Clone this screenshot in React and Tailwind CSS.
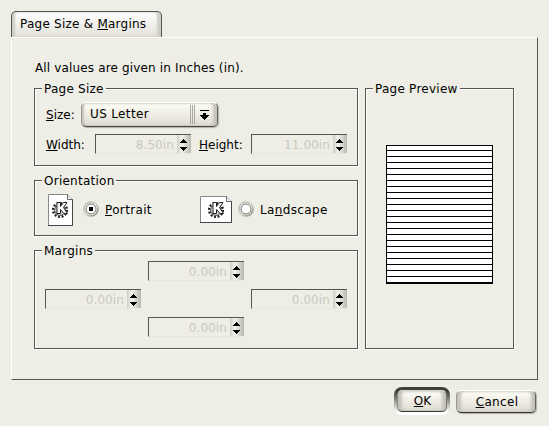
import clsx from "clsx";

const previewLines = Array.from({ length: 23 }, (_, i) => i);

// Group box with the etched border and the title over the top line
function GroupBox({ title, titleWidth, className, children }) {
  return (
    <div
      className={clsx(
        "relative border border-[#555552] shadow-[1px_1px_0_#fff,inset_1px_1px_0_#fff]",
        className
      )}
    >
      <span
        className={clsx(
          "absolute left-[7px] -top-[8px] h-[16px] bg-[#eeeee6] pl-[2px] leading-[16px] tracking-[0.25px] whitespace-nowrap",
          titleWidth
        )}
      >
        {title}
      </span>
      {children}
    </div>
  );
}

function SpinBox({ value, className }) {
  return (
    <div
      className={clsx(
        "flex h-[20px] w-[96px] shrink-0 border-t border-l border-b border-t-[#555552] border-l-[#555552] border-b-[#e6e6e6]",
        className
      )}
    >
      <span className="flex-1 pr-[3px] text-right leading-[20px] tracking-[0.1px] text-[#c9c9c0]">
        {value}
      </span>
      <span className="flex h-[18px] w-[14px] items-center justify-center bg-linear-to-r from-[#d0cfc6] via-[#f4f3ec] via-35% to-[#b9b8af]">
        <svg width="14" height="18" viewBox="0 0 14 18" shapeRendering="crispEdges">
          <path d="M6 4h1v1h1v1h1v1h1v1H3V7h1V6h1V5h1z" />
          <path d="M3 12h7v1H9v1H8v1H7v1H6v-1H5v-1H4v-1H3z" />
        </svg>
      </span>
    </div>
  );
}

function Gear({ x, y }) {
  return (
    <g transform={`translate(${x} ${y})`}>
      <circle cx="8" cy="9" r="6.8" fill="none" stroke="#222" strokeWidth="2.6" strokeDasharray="1.9 1.66" />
      <circle cx="8" cy="9" r="5.4" fill="#d4d4d0" stroke="#555" strokeWidth="1" />
      <path
        d="M5 1.5H8.5V5.5L11.5 1.5H15L11.5 6.5L15.5 12.5H12L8.5 8.5V12.5H5z"
        fill="#fff"
        stroke="#222"
        strokeWidth="1"
      />
    </g>
  );
}

function PortraitIcon() {
  return (
    <svg width="26" height="32" viewBox="0 0 26 32">
      <path d="M0.5 0.5H19.5L24.5 5.5V31.5H0.5z" fill="#fff" stroke="#888" />
      <path d="M24.5 5V31.5H0" fill="none" stroke="#444" />
      <path d="M19.5 0.5V5.5H24.5" fill="#eee" stroke="#666" />
      <Gear x={4} y={7} />
    </svg>
  );
}

function LandscapeIcon() {
  return (
    <svg width="32" height="27" viewBox="0 0 32 27">
      <path d="M0.5 0.5H26.5L31.5 5.5V26.5H0.5z" fill="#fff" stroke="#888" />
      <path d="M31.5 5V26.5H0" fill="none" stroke="#444" />
      <path d="M26.5 0.5V5.5H31.5" fill="#eee" stroke="#666" />
      <Gear x={8} y={5} />
    </svg>
  );
}

function Radio({ id, checked }) {
  return (
    <svg width="17" height="17" viewBox="0 0 17 17">
      <defs>
        <linearGradient id={id} x1="0" y1="0" x2="1" y2="1">
          <stop offset="0" stopColor="#b8b7ae" />
          <stop offset="0.5" stopColor="#cccbc3" />
          <stop offset="1" stopColor="#7c7c76" />
        </linearGradient>
      </defs>
      <circle cx="8" cy="8" r="7" fill="#f4f3ed" stroke={`url(#${id})`} strokeWidth="1.6" />
      <circle cx="8" cy="8" r="5" fill="#fff" stroke="#777770" />
      {checked && <rect x="6" y="6" width="4" height="4" fill="#000" />}
    </svg>
  );
}

export default function App() {
  return (
    <div className="h-[426px] w-[549px] overflow-hidden bg-[#eeeee6] pt-[11px] pl-[11px] font-['DejaVu_Sans',sans-serif] text-[12px] text-black">
      <div className="h-[26px] w-[151px] rounded-t-[5px] border border-b-0 border-[#555552] bg-linear-to-b from-white to-[#e2e0d8] pl-[8px] leading-[24px] tracking-[0.24px] whitespace-nowrap shadow-[inset_3px_0_2px_#cfcec6,inset_-4px_0_2px_#cfcec6]">
        Page Size &amp; <u>M</u>argins
      </div>

      <div className="h-[343px] w-[527px] border border-t-white border-r-[#555552] border-b-[#555552] border-l-white pt-[22px] pl-[22px]">
        <p className="h-[28px] pl-px leading-[16px] tracking-[0.15px]">
          All values are given in Inches (in).
        </p>

        <div className="flex gap-[7px]">
          <div className="flex flex-col">
            <GroupBox title="Page Size" titleWidth="w-[64px]" className="h-[78px] w-[324px]">
              <div className="flex pt-[13px] pl-[11px]">
                <span className="w-[35px] leading-[26px]">
                  <u>S</u>ize:
                </span>
                <div className="flex h-[25px] w-[137px] rounded-[5px] border border-t-white border-r-[#666660] border-b-[#444440] border-l-[#999990] bg-linear-to-b from-[#fffef8] to-[#dddbd0] pl-[8px] shadow-[inset_2px_0_2px_#c4c3ba,inset_-4px_0_3px_#c4c3ba,1px_1px_1px_#b0afa8]">
                  <span className="flex-1 leading-[22px] tracking-[0.35px]">US Letter</span>
                  <span className="mt-[2px] flex h-[19px] gap-px">
                    <i className="w-px bg-[#aaa9a0]" />
                    <i className="w-px bg-[#aaa9a0]" />
                    <i className="w-px bg-[#aaa9a0]" />
                  </span>
                  <svg className="mt-[7px] mr-[8px] ml-[5px]" width="9" height="12" viewBox="0 0 9 12" shapeRendering="crispEdges">
                    <path d="M0 0h9v1H0zM3 3h3v2h3v1H8v1H7v1H6v1H5v1H4V9H3V8H2V7H1V6H0V5h3z" />
                  </svg>
                </div>
              </div>
              <div className="mt-[6px] flex pl-[11px]">
                <span className="w-[49px] leading-[22px]">
                  <u>W</u>idth:
                </span>
                <SpinBox value="8.50in" />
                <span className="ml-[8px] w-[52px] leading-[22px]">
                  <u>H</u>eight:
                </span>
                <SpinBox value="11.00in" />
              </div>
            </GroupBox>

            <GroupBox title="Orientation" titleWidth="w-[74px]" className="mt-[14px] h-[56px] w-[324px]">
              <div className="flex h-[57px] items-center pl-[13px]">
                <PortraitIcon />
                <div className="ml-[9px] flex w-[117px] items-center">
                  <Radio id="portrait" checked />
                  <span className="ml-[5px] tracking-[0.35px]">
                    <u>P</u>ortrait
                  </span>
                </div>
                <LandscapeIcon />
                <div className="ml-[6px] flex items-center">
                  <Radio id="landscape" />
                  <span className="ml-[5px] tracking-[0.35px]">
                    La<u>n</u>dscape
                  </span>
                </div>
              </div>
            </GroupBox>

            <GroupBox title="Margins" titleWidth="w-[53px]" className="mt-[14px] h-[99px] w-[324px]">
              <div className="flex flex-col gap-[8px] pt-[10px] pl-[10px]">
                <SpinBox value="0.00in" className="ml-[103px]" />
                <div className="flex gap-[110px]">
                  <SpinBox value="0.00in" />
                  <SpinBox value="0.00in" />
                </div>
                <SpinBox value="0.00in" className="ml-[103px]" />
              </div>
            </GroupBox>
          </div>

          <GroupBox title="Page Preview" titleWidth="w-[87px]" className="h-[261px] w-[149px]">
            <div className="mt-[56px] ml-[20px] h-[139px] w-[107px] border border-black bg-white pt-[4px]">
              {previewLines.map((n) => (
                <div key={n} className="h-[6px] border-t border-black last:h-px" />
              ))}
            </div>
          </GroupBox>
        </div>
      </div>

      <div className="mt-[7px] flex pl-[383px]">
        <div className="h-[28px] w-[56px] rounded-[8px] bg-linear-to-b from-[#3c3f3a] from-15% via-[#a5a59f] via-55% to-white to-90% p-[3px]">
          <button className="h-[22px] w-[50px] rounded-[5px] border border-t-[#d8d7ce] border-r-[#777770] border-b-[#333330] border-l-[#888880] bg-linear-to-b from-[#fffef8] to-[#dddbd0] pl-px leading-[19px] shadow-[inset_4px_0_3px_#c4c3ba,inset_-4px_0_3px_#c4c3ba]">
            <u>O</u>K
          </button>
        </div>
        <button className="mt-[3px] ml-[6px] h-[23px] w-[80px] rounded-[5px] border border-t-white border-r-[#666660] border-b-[#333330] border-l-[#999990] bg-linear-to-b from-[#fffef8] to-[#dddbd0] pl-[2px] leading-[20px] tracking-[0.33px] shadow-[inset_4px_0_3px_#c4c3ba,inset_-4px_0_3px_#c4c3ba,1px_1px_1px_#b0afa8]">
          <u>C</u>ancel
        </button>
      </div>
    </div>
  );
}
